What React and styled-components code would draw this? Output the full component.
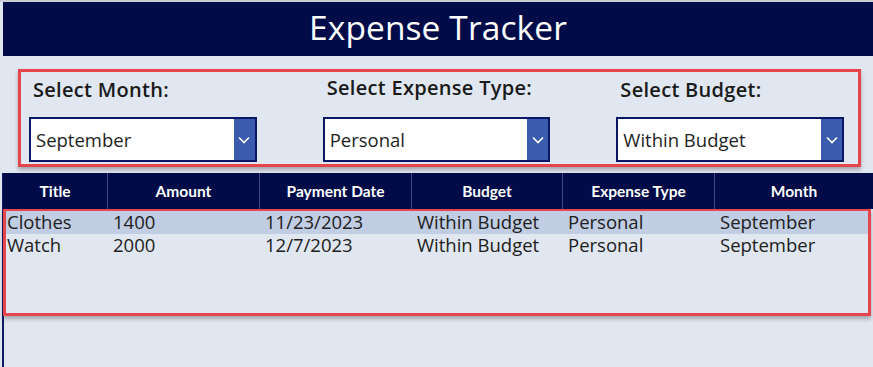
import React from "react";
import styled, { createGlobalStyle } from "styled-components";

const Global = createGlobalStyle`
  html, body { margin: 0; padding: 0; background: #e1e7f1; }
  * { box-sizing: border-box; }
`;

const NAVY = "#000b48";
const RED = "#e6464b";

const Page = styled.div`
  width: 873px;
  height: 367px;
  overflow: hidden;
  background: #e1e7f1;
  border-top: 2px solid #c9ccd3;
  display: flex;
  flex-direction: column;
  font-family: "Open Sans", "Noto Sans", sans-serif;
`;

const Header = styled.header`
  margin-left: 3px;
  height: 54px;
  background: ${NAVY};
  display: flex;
  align-items: center;
  justify-content: center;
`;

const Title = styled.h1`
  margin: 0;
  color: #ffffff;
  font-weight: 400;
  font-size: 33.5px;
  letter-spacing: 0.1px;
  line-height: 1;
  padding-bottom: 2px;
`;

const FilterBox = styled.section`
  margin: 13px 12px 0 18px;
  height: 98px;
  border: 3px solid ${RED};
  box-shadow: 0 3px 4px rgba(0, 0, 0, 0.28);
  display: flex;
  gap: 66px;
  padding: 0 14px 0 8px;
`;

const Filter = styled.div`
  width: 228px;
  display: flex;
  flex-direction: column;
`;

const Label = styled.div`
  font-weight: 600;
  font-size: 20px;
  line-height: 27px;
  color: #1a1a1a;
  height: 45px;
  padding: ${(p) => (p.$raised ? "2px" : "4px")} 0 0 4px;
  letter-spacing: 0.3px;
`;

const Dropdown = styled.div`
  height: 45px;
  border: 2px solid #0a1766;
  background: #ffffff;
  display: flex;
  align-items: stretch;
`;

const DropValue = styled.div`
  flex: 1;
  display: flex;
  align-items: center;
  padding: 0 0 0 5px;
  font-size: 18.5px;
  color: #1e1e1e;
`;

const Chevron = styled.div`
  width: 21px;
  background: #3a5bae;
  display: flex;
  align-items: center;
  justify-content: center;
`;

const Gallery = styled.div`
  margin: 6px 0 0 2px;
  flex: 1;
  border-left: 2px solid #0d1a63;
  display: flex;
  flex-direction: column;
`;

const HeaderRow = styled.div`
  height: 36px;
  background: ${NAVY};
  display: grid;
  grid-template-columns: 104px 152px 152px 151px 152px 1fr;
  margin-left: -1px;
`;

const HeadCell = styled.div`
  display: flex;
  align-items: center;
  justify-content: center;
  color: #ffffff;
  font-family: "Lato", "Open Sans", sans-serif;
  font-weight: 700;
  font-size: 15.5px;
  border-left: ${(p) => (p.$first ? "none" : "1px solid #3a4a8e")};
`;

const RowsBox = styled.div`
  margin: 0 2px 0 -1px;
  height: 107px;
  border: 3px solid ${RED};
  border-top-width: 2px;
  box-shadow: 0 3px 4px rgba(0, 0, 0, 0.28);
`;

const Row = styled.div`
  height: 22.5px;
  display: grid;
  grid-template-columns: 102px 152px 152px 151px 152px 1fr;
  background: ${(p) => (p.$selected ? "#c1cde3" : "transparent")};
  align-items: center;
`;

const Cell = styled.div`
  font-size: 18.5px;
  color: #202020;
  padding-left: ${(p) => (p.$first ? "1px" : "5px")};
  white-space: nowrap;
  line-height: 22px;
`;

const filters = [
  { label: "Select Month:", value: "September" },
  { label: "Select Expense Type:", value: "Personal", raised: true },
  { label: "Select Budget:", value: "Within Budget" },
];

const columns = ["Title", "Amount", "Payment Date", "Budget", "Expense Type", "Month"];

const rows = [
  ["Clothes", "1400", "11/23/2023", "Within Budget", "Personal", "September"],
  ["Watch", "2000", "12/7/2023", "Within Budget", "Personal", "September"],
];

const ChevronIcon = () => (
  <svg width="12" height="8" viewBox="0 0 12 8">
    <polyline points="1,1.5 6,6.5 11,1.5" fill="none" stroke="#ffffff" strokeWidth="1.6" />
  </svg>
);

export default function App() {
  return (
    <>
      <Global />
      <Page>
        <Header>
          <Title>Expense Tracker</Title>
        </Header>
        <FilterBox>
          {filters.map((f) => (
            <Filter key={f.label}>
              <Label $raised={f.raised}>{f.label}</Label>
              <Dropdown>
                <DropValue>{f.value}</DropValue>
                <Chevron>
                  <ChevronIcon />
                </Chevron>
              </Dropdown>
            </Filter>
          ))}
        </FilterBox>
        <Gallery>
          <HeaderRow>
            {columns.map((c, i) => (
              <HeadCell key={c} $first={i === 0}>
                {c}
              </HeadCell>
            ))}
          </HeaderRow>
          <RowsBox>
            {rows.map((r, i) => (
              <Row key={r[0]} $selected={i === 0}>
                {r.map((v, j) => (
                  <Cell key={j} $first={j === 0}>
                    {v}
                  </Cell>
                ))}
              </Row>
            ))}
          </RowsBox>
        </Gallery>
      </Page>
    </>
  );
}
